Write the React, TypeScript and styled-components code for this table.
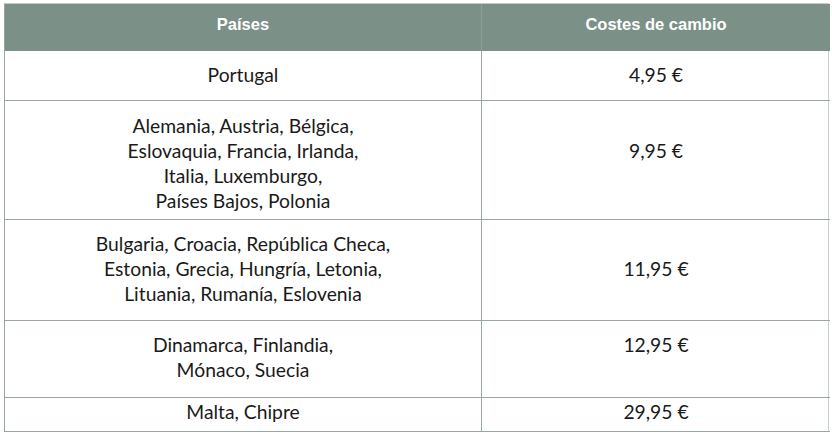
import React from "react";
import styled, { createGlobalStyle } from "styled-components";

const Global = createGlobalStyle`
  html, body { margin: 0; padding: 0; background: #ffffff; }
`;

const Page = styled.div`
  padding: 3px 3px 0 4px;
  width: 832px;
  height: 435px;
  box-sizing: border-box;
  overflow: hidden;
`;

const Table = styled.div`
  display: grid;
  grid-template-columns: 476px 349px;
  border-left: 1px solid #9aa6a0;
  border-right: 1px solid #c9d0cc;
  border-top: 1px solid #c4cdc8;
`;

const HeadCell = styled.div<{ $last?: boolean }>`
  height: 47px;
  background: #7b9087;
  color: #ffffff;
  font-family: "Liberation Sans", Arial, sans-serif;
  font-weight: 700;
  font-size: 16.5px;
  display: flex;
  justify-content: center;
  padding-top: 11px;
  box-sizing: border-box;
  border-left: ${(p) => (p.$last ? "1px solid #8e9f97" : "none")};
  line-height: 18px;
`;

const Cell = styled.div<{ $h: number; $pad: number; $right?: boolean }>`
  height: ${(p) => p.$h}px;
  padding-top: ${(p) => p.$pad}px;
  box-sizing: border-box;
  border-bottom: 1px solid #9aa6a0;
  border-left: ${(p) => (p.$right ? "1px solid #9aa6a0" : "none")};
  font-family: "Lato", "Open Sans", sans-serif;
  font-size: 19.3px;
  line-height: 25px;
  color: #1a1a1a;
  text-align: center;
`;

const rows: { c: string[]; price: string; h: number; pad: number; ppad: number }[] = [
  { c: ["Portugal"], price: "4,95 €", h: 50, pad: 11, ppad: 11 },
  {
    c: ["Alemania, Austria, Bélgica,", "Eslovaquia, Francia, Irlanda,", "Italia, Luxemburgo,", "Países Bajos, Polonia"],
    price: "9,95 €",
    h: 119,
    pad: 12,
    ppad: 37,
  },
  {
    c: ["Bulgaria, Croacia, República Checa,", "Estonia, Grecia, Hungría, Letonia,", "Lituania, Rumanía, Eslovenia"],
    price: "11,95 €",
    h: 101,
    pad: 11,
    ppad: 36,
  },
  { c: ["Dinamarca, Finlandia,", "Mónaco, Suecia"], price: "12,95 €", h: 77, pad: 11, ppad: 11 },
  { c: ["Malta, Chipre"], price: "29,95 €", h: 34, pad: 1, ppad: 1 },
];

export default function App() {
  return (
    <Page>
      <Global />
      <Table>
        <HeadCell>Países</HeadCell>
        <HeadCell $last>Costes de cambio</HeadCell>
        {rows.map((r, i) => (
          <React.Fragment key={i}>
            <Cell $h={r.h} $pad={r.pad}>
              {r.c.map((l, j) => (
                <div key={j}>{l}</div>
              ))}
            </Cell>
            <Cell $h={r.h} $pad={r.ppad} $right>
              {r.price}
            </Cell>
          </React.Fragment>
        ))}
      </Table>
    </Page>
  );
}
